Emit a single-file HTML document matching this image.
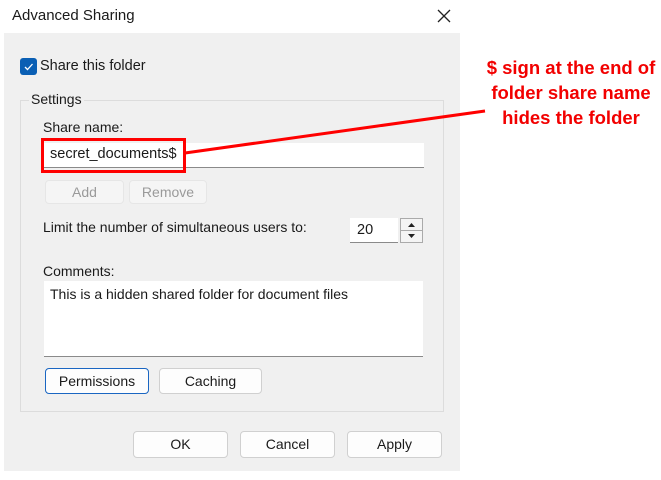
<!DOCTYPE html><html><head><style>
*{box-sizing:border-box;margin:0;padding:0}
body{width:661px;height:480px;background:#fff;position:relative;overflow:hidden;font-family:"Liberation Sans",sans-serif;font-size:13.5px;color:#1a1a1a}
.a{position:absolute}
.btn{position:absolute;background:#fdfdfd;border:1px solid #d0d0d0;border-radius:4px;text-align:center;font-size:14px}
.dis{background:#f5f5f5;border-color:#e6e6e6;color:#9a9a9a}
.inp{position:absolute;background:#fff;border-bottom:1px solid #8a8a8a}
.red{color:#f20000;font-weight:bold;font-size:18.5px;text-align:center;line-height:25px}
</style></head><body>
<div class="a" style="left:4px;top:33px;width:456px;height:438px;background:#f0f0f0"></div>
<div class="a" style="left:12px;top:7px;font-size:15px">Advanced Sharing</div>
<svg class="a" style="left:436px;top:8px" width="16" height="16"><path d="M2 2L14 14M14 2L2 14" stroke="#222" stroke-width="1.3"/></svg>
<div class="a" style="left:20px;top:58px;width:17px;height:17px;background:#0a5fb4;border-radius:3px"></div>
<svg class="a" style="left:20px;top:58px" width="17" height="17"><path d="M5 9L7.5 11.5L12.5 6" stroke="#fff" stroke-width="1.3" fill="none"/></svg>
<div class="a" style="left:40px;top:58px;font-size:14.5px">Share this folder</div>
<div class="a" style="left:20px;top:100px;width:424px;height:312px;border:1px solid #dcdcdc"></div>
<div class="a" style="left:29px;top:91px;background:#f0f0f0;padding:0 2px;font-size:14px">Settings</div>
<div class="a" style="left:43px;top:119px;font-size:14px">Share name:</div>
<div class="inp" style="left:44px;top:143px;width:380px;height:25px"></div>
<div class="a" style="left:50px;top:146px;font-size:14.5px">secret_documents$</div>
<div class="a" style="left:41px;top:138px;width:145px;height:35px;border:3px solid #f00"></div>
<svg class="a" style="left:0;top:0" width="661" height="480"><path d="M185 153L485 111" stroke="#f00" stroke-width="3"/></svg>
<div class="btn dis" style="left:45px;top:180px;width:79px;height:24px;line-height:22px">Add</div>
<div class="btn dis" style="left:129px;top:180px;width:78px;height:24px;line-height:22px">Remove</div>
<div class="a" style="left:43px;top:219px;font-size:14px">Limit the number of simultaneous users to:</div>
<div class="inp" style="left:350px;top:218px;width:48px;height:25px"></div>
<div class="a" style="left:357px;top:222px;font-size:14.5px">20</div>
<div class="a" style="left:400px;top:218px;width:23px;height:25px;border:1px solid #aaa;background:#f4f4f4"></div>
<div class="a" style="left:401px;top:230px;width:21px;height:1px;background:#aaa"></div>
<svg class="a" style="left:400px;top:218px" width="23" height="25"><path d="M8 9L11.5 5L15 9Z M8 16L11.5 20L15 16Z" fill="#222"/></svg>
<div class="a" style="left:43px;top:263px;font-size:14px">Comments:</div>
<div class="inp" style="left:44px;top:281px;width:379px;height:76px"></div>
<div class="a" style="left:50px;top:286px;font-size:14px">This is a hidden shared folder for document files</div>
<div class="btn" style="left:45px;top:368px;width:104px;height:26px;line-height:24px;border-color:#1a66c2">Permissions</div>
<div class="btn" style="left:159px;top:368px;width:103px;height:26px;line-height:24px">Caching</div>
<div class="btn" style="left:133px;top:431px;width:95px;height:27px;line-height:25px">OK</div>
<div class="btn" style="left:240px;top:431px;width:95px;height:27px;line-height:25px">Cancel</div>
<div class="btn" style="left:347px;top:431px;width:95px;height:27px;line-height:25px">Apply</div>
<div class="a red" style="left:482px;top:55px;width:178px">$ sign at the end of<br>folder share name<br>hides the folder</div>
</body></html>
